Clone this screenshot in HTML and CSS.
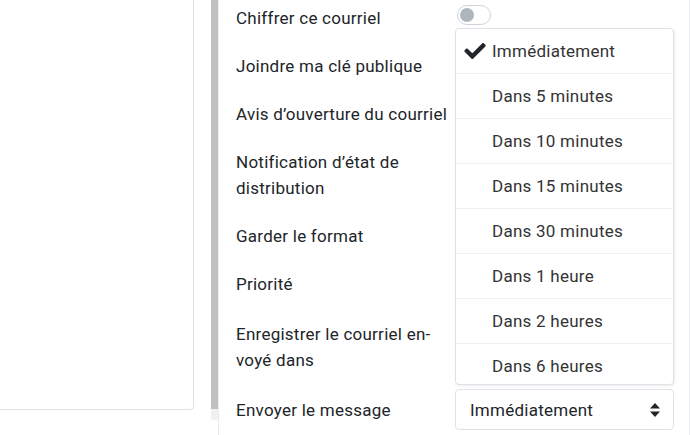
FILE: index.html
```html
<!DOCTYPE html>
<html lang="fr">
<head>
    <meta charset="UTF-8">
    <meta name="viewport" content="width=device-width, initial-scale=1.0">
    <title>Options d'envoi</title>
    <link rel="stylesheet" href="styles.css">
</head>
<body>
    <div class="layout">
        <div class="mail-column">
            <div class="mail-card"></div>
        </div>
        <div class="side-scroll"><div class="side-thumb"></div></div>

        <div class="settings">
            <div class="row">
                <label class="row-label" for="encrypt">Chiffrer ce courriel</label>
                <div class="row-control">
                    <span class="switch" id="encrypt"><span class="switch-knob"></span></span>
                </div>
            </div>
            <div class="row">
                <span class="row-label">Joindre ma clé publique</span>
            </div>
            <div class="row">
                <span class="row-label">Avis d’ouverture du courriel</span>
            </div>
            <div class="row">
                <span class="row-label">Notification d’état de distribution</span>
            </div>
            <div class="row">
                <span class="row-label">Garder le format</span>
            </div>
            <div class="row">
                <span class="row-label">Priorité</span>
            </div>
            <div class="row row-folder">
                <span class="row-label">Enregistrer le courriel en&shy;voyé dans</span>
            </div>
            <div class="row row-send">
                <span class="row-label">Envoyer le message</span>
                <div class="row-control">
                    <!-- menu ouvert au-dessus du sélecteur -->
                    <div class="dropup">
                        <ul class="dropup-list">
                            <li class="dropup-item selected">
                                <span class="dropup-check">
                                    <svg viewBox="0 64 512 384" width="22" height="16"><path d="M173.9 439.4l-166.4-166.4c-10-10-10-26.2 0-36.2l36.2-36.2c10-10 26.2-10 36.2 0L192 312.7 432.1 72.6c10-10 26.2-10 36.2 0l36.2 36.2c10 10 10 26.2 0 36.2l-294.4 294.4c-10 10-26.2 10-36.2 0z" fill="#212529"/></svg>
                                </span>Immédiatement
                            </li>
                            <li class="dropup-item"><span class="dropup-check"></span>Dans 5 minutes</li>
                            <li class="dropup-item"><span class="dropup-check"></span>Dans 10 minutes</li>
                            <li class="dropup-item"><span class="dropup-check"></span>Dans 15 minutes</li>
                            <li class="dropup-item"><span class="dropup-check"></span>Dans 30 minutes</li>
                            <li class="dropup-item"><span class="dropup-check"></span>Dans 1 heure</li>
                            <li class="dropup-item"><span class="dropup-check"></span>Dans 2 heures</li>
                            <li class="dropup-item"><span class="dropup-check"></span>Dans 6 heures</li>
                            <li class="dropup-item"><span class="dropup-check"></span>Dans 12 heures</li>
                        </ul>
                    </div>
                    <div class="select">
                        <span>Immédiatement</span>
                        <svg class="select-caret" viewBox="0 0 10 14" width="10" height="14">
                            <path d="M5 0L10 5.5H0z M5 14L0 8.5H10z" fill="#212529"/>
                        </svg>
                    </div>
                </div>
            </div>
        </div>
    </div>
</body>
</html>
```

FILE: styles.css
```css
body {
    margin: 0;
    font-family: Roboto, "Liberation Sans", sans-serif;
    font-size: 17px;
    letter-spacing: 0.25px;
    color: #212529;
    background: #fff;
    overflow: hidden;
}

.layout {
    display: flex;
    height: 435px;
}

.mail-column {
    flex: 0 0 194px;
    padding: 0 17px 0 0;
}

.mail-card {
    height: 409px;
    border-right: 1px solid #dee2e6;
    border-bottom: 1px solid #dee2e6;
    border-bottom-right-radius: 4px;
}

.side-scroll {
    flex: 0 0 7px;
    height: 420px;
    background: #f1f1f1;
}

.side-thumb {
    height: 409px;
    background: #c1c1c1;
}

.settings {
    flex: 1;
    border-left: 1px solid #e9ecef;
    border-right: 1px solid #e9ecef;
    padding: 5px 0 0 17px;
}

.row {
    display: flex;
    margin-top: 22px;
}

.row:first-child {
    margin-top: 0;
}

.row-folder {
    margin-top: 24px;
}

.row-send {
    margin-top: 16px;
    align-items: center;
}

.row-label {
    flex: 0 0 212px;
    line-height: 26px;
    margin-right: 7px;
}

.row-control {
    position: relative;
    flex: 1;
}

.switch {
    display: block;
    box-sizing: border-box;
    width: 34px;
    height: 20px;
    margin-left: 2px;
    border: 1px solid #ced4da;
    border-radius: 10px;
    padding: 2px;
}

.switch-knob {
    display: block;
    width: 14px;
    height: 14px;
    border-radius: 50%;
    background: #adb5bd;
}

.select {
    display: flex;
    align-items: center;
    justify-content: space-between;
    box-sizing: border-box;
    width: 219px;
    height: 41px;
    padding: 0 13px 0 14px;
    border: 1px solid #dee2e6;
    border-radius: 4px;
}

.dropup {
    position: absolute;
    left: 0;
    bottom: calc(100% + 4px);
    box-sizing: border-box;
    width: 219px;
    height: 357px;
    border: 1px solid #dee2e6;
    border-radius: 4px;
    background: #fff;
    box-shadow: 1px 1px 3px rgba(0, 0, 0, 0.08);
    overflow: hidden;
}

.dropup-list {
    list-style: none;
    margin: 0;
    padding: 0;
    height: 100%;
    overflow-y: scroll;
    margin-right: 1px;
}

.dropup-list::-webkit-scrollbar {
    width: 7px;
}

.dropup-list::-webkit-scrollbar-track {
    background: #f1f1f1;
}

.dropup-list::-webkit-scrollbar-thumb {
    background: #c1c1c1;
}

.dropup-item {
    display: flex;
    align-items: center;
    height: 44px;
    padding-left: 8px;
    border-bottom: 1px solid #f0f0f0;
    color: #333;
}

.dropup-check {
    display: inline-flex;
    width: 28px;
}
```
